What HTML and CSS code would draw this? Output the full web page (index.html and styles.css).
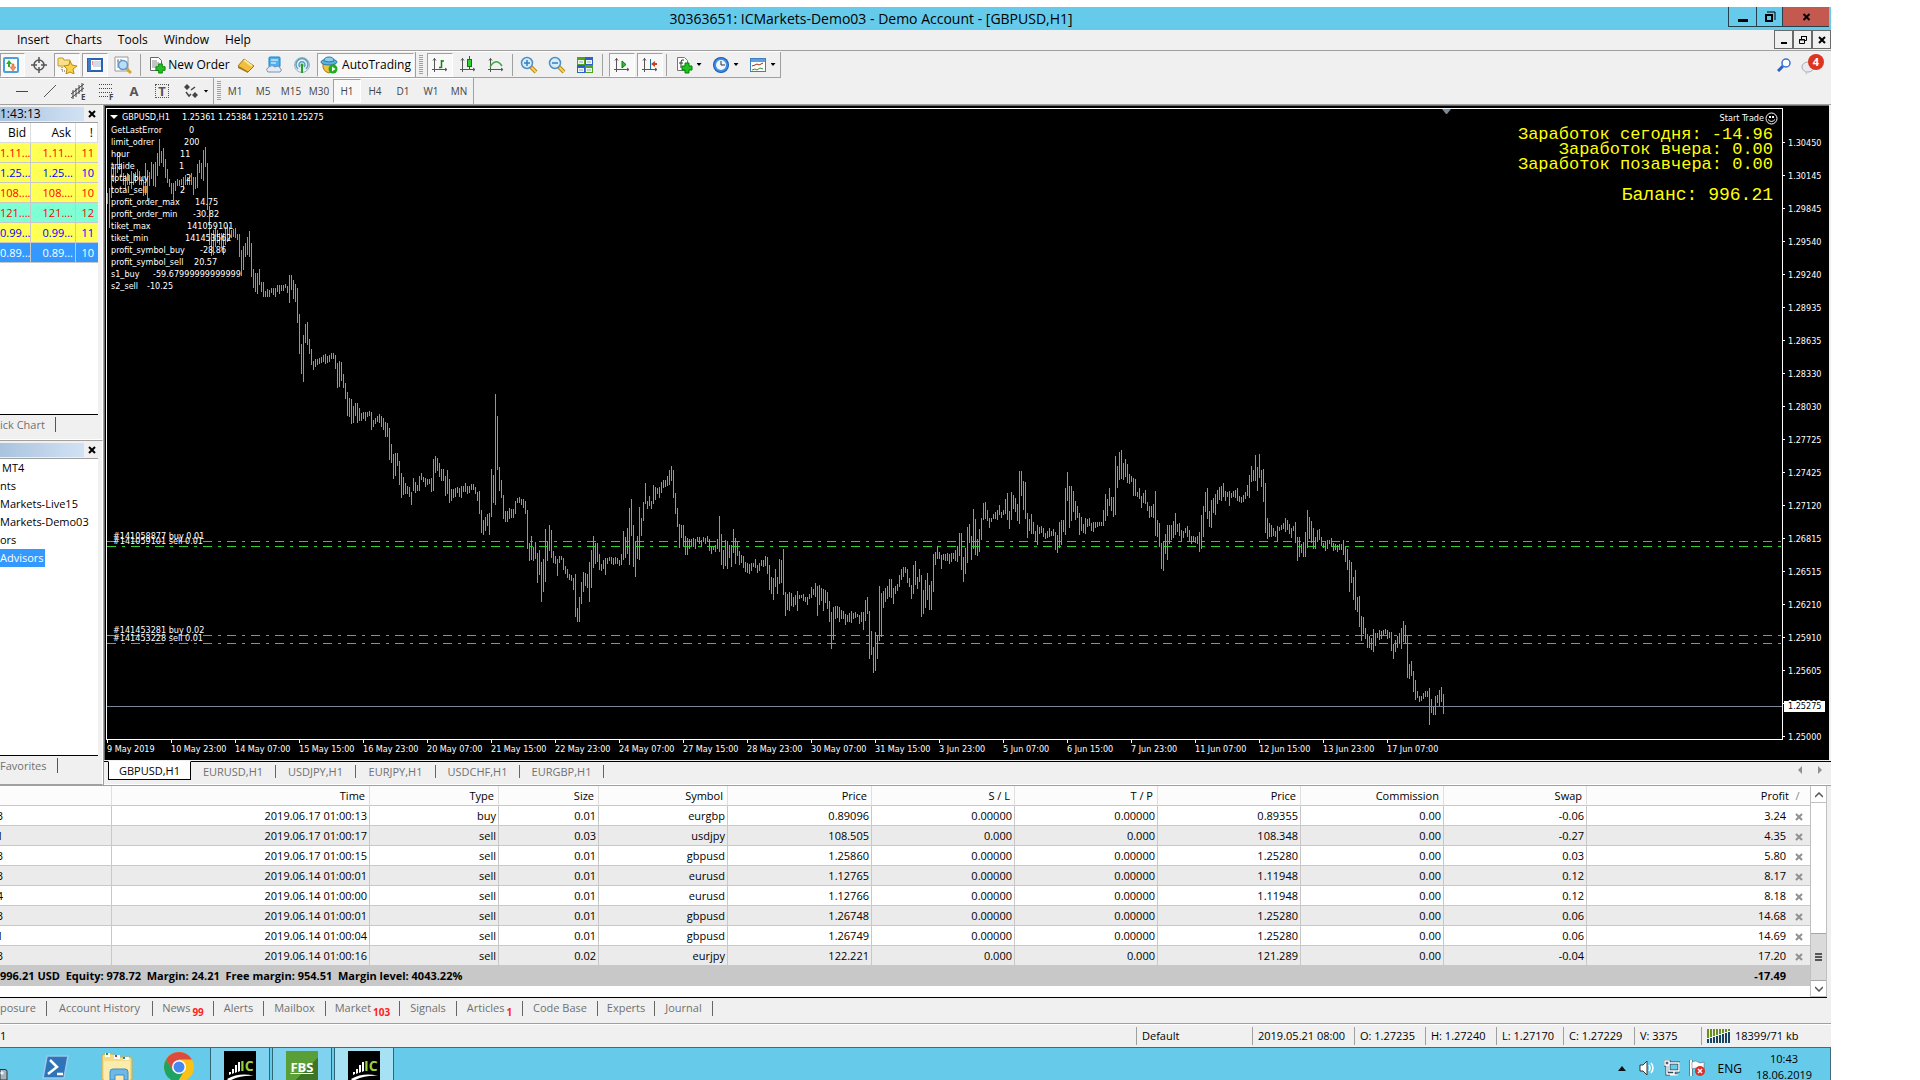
FILE: index.html
```html
<!DOCTYPE html>
<html lang="en">
<head>
<meta charset="utf-8">
<title>30363651: ICMarkets-Demo03 - Demo Account - [GBPUSD,H1]</title>
<link rel="stylesheet" href="styles.css">
</head>
<body>
<svg class="defs" aria-hidden="true">
  <defs>
    <symbol id="i-axes" viewBox="0 0 18 18"><path d="M3.5 2v14M1 13.500h15M2 4.500l1.500-2 1.500 2M14 12l2 1.500-2 1.500" fill="none" stroke="#555"/></symbol>
    <symbol id="i-lens" viewBox="0 0 18 18"><path d="M11 11l5 5" stroke="#b98a1c" stroke-width="4"/><path d="M11 11l5 5" stroke="#f6d55c" stroke-width="2"/><circle cx="7" cy="7" r="5.500" fill="#d6ecfb" stroke="#4a90c8" stroke-width="1.500"/></symbol>
    <symbol id="i-plus" viewBox="0 0 12 12"><path d="M4 1h4v3h3v4H8v3H4V8H1V4h3z" fill="#1fc41f" stroke="#0b7d0b"/></symbol>
    <symbol id="i-x" viewBox="0 0 8 8"><path d="M1 1l6 6M7 1L1 7" stroke="currentColor" stroke-width="2" fill="none"/></symbol>
    <symbol id="i-bars" viewBox="0 0 32 32"><path d="M0 0h32v32H0z" fill="#000"/><path d="M5 24v-3h2v2zM8 23v-5h2v4zM11 22v-8h2v7zM14 21V11h2v9z" fill="#fff"/><path d="M3 28q13-7 27-3-13-1-25 5z" fill="#fff"/></symbol>
  </defs>
</svg>

<div class="app">
  <header class="titlebar">
    <h1>30363651: ICMarkets-Demo03 - Demo Account - [GBPUSD,H1]</h1>
    <div class="win-buttons">
      <button type="button" class="w-min" aria-label="Minimize"><svg width="12" height="12"><path d="M1 8h10v3H1z"/></svg></button>
      <button type="button" class="w-max" aria-label="Restore"><svg width="12" height="12"><path d="M3 1h8v8" fill="none" stroke="#000"/><path d="M2 4h6v6H2z" fill="none" stroke="#000" stroke-width="2"/></svg></button>
      <button type="button" class="w-close" aria-label="Close"><svg width="9" height="8"><use href="#i-x"/></svg></button>
    </div>
  </header>

  <nav class="menubar">
    <button type="button">Insert</button><button type="button">Charts</button><button type="button">Tools</button><button type="button">Window</button><button type="button">Help</button>
    <div class="mdi">
      <button type="button" aria-label="Minimize chart"><svg width="10" height="10"><path d="M2 7h6v2H2z"/></svg></button>
      <button type="button" aria-label="Restore chart"><svg width="10" height="10"><path d="M3.500 4V1.500h5v4H7M3 1.500h6M1.500 4.500h5v4h-5zM1 5h6" fill="none" stroke="#000"/></svg></button>
      <button type="button" aria-label="Close chart"><svg width="8" height="8"><use href="#i-x"/></svg></button>
    </div>
  </nav>

  <div class="toolbars">
    <div class="bar">
      <button type="button" class="tb on first" aria-label="Market Watch"><svg width="18" height="18"><rect x="2" y="2" width="14" height="14" rx="1" fill="#fff" stroke="#4b9fdc" stroke-width="2"/><path d="M4 8l3-4 3 4H8v3H6V8z" fill="#26b226"/><path d="M8 11l3 4 3-4h-2V8h-2v3z" fill="#f4935c" stroke="#d4501c" stroke-width=".5"/></svg></button>
      <button type="button" class="tb" aria-label="Data Window"><svg width="18" height="18"><circle cx="9" cy="9" r="5" fill="none" stroke="#555" stroke-width="1.500"/><path d="M9 1v6M9 11v6M1 9h6M11 9h6" stroke="#555" stroke-width="1.500"/></svg></button>
      <button type="button" class="tb on" aria-label="Navigator"><svg width="20" height="18"><path d="M1 3q0-1 1-1h4l1 2h6v6H1z" fill="#f8e08c" stroke="#c79a20"/><path d="M5 11v4h3" fill="none" stroke="#555" stroke-dasharray="1 1"/><path d="M13 5l2 4 5 1-4 3 1 5-4-2-4 2 1-5-3-3 5-1z" fill="#fbd24a" stroke="#b98a14"/></svg></button>
      <button type="button" class="tb on" aria-label="Terminal"><svg width="18" height="18"><rect x="2" y="3" width="14" height="12" fill="#fff" stroke="#2b62ad" stroke-width="2"/><path d="M2 3h3v12H2z" fill="#3c7ac8"/><path d="M7 6h8M7 8h8M7 10h8" stroke="#9db9d8"/><path d="M6 6h1M6 8h1" stroke="#d22"/></svg></button>
      <button type="button" class="tb" aria-label="Strategy Tester"><svg width="18" height="18"><path d="M1 1h13v14H1z" fill="#fff" stroke="#999"/><path d="M4 3v9M7 3v9M3 5h2M6 8h2" stroke="#888"/><path d="M12 12l5 5" stroke="#d6a72a" stroke-width="3"/><circle cx="9" cy="9" r="4.500" fill="#bcdcf4" stroke="#5b9bd0" stroke-width="1.500"/></svg></button>
      <i class="sep"></i>
      <button type="button" class="tb new-order"><svg width="18" height="18"><path d="M2.500 1.500h8l3 3v10h-11z" fill="#fff" stroke="#666"/><path d="M4 5h5M4 7h7M4 9h7M4 11h4" stroke="#888"/><use href="#i-plus" x="7" y="7" width="11" height="11"/></svg>New Order</button>
      <button type="button" class="tb" aria-label="MetaEditor"><svg width="18" height="18"><path d="M1 10l6-7 10 7-6 6z" fill="#f0bf3d" stroke="#a6741a"/><path d="M1 10l10 6v1L1 12z" fill="#a6741a"/><path d="M7 4l8 6" stroke="#fdeaa0" stroke-width="2"/></svg></button>
      <button type="button" class="tb" aria-label="MQL5 Community"><svg width="18" height="18"><rect x="4" y="1" width="11" height="10" rx="1" fill="#4fb0ef" stroke="#1f80c8"/><path d="M6 4h7M6 7h5" stroke="#fff"/><path d="M3 16q-3-3 1-5 3-3 6 0 4-2 5 1 3 2 0 4z" fill="#e3ebf5" stroke="#7a93b5"/></svg></button>
      <button type="button" class="tb" aria-label="Signals"><svg width="18" height="18"><circle cx="9" cy="9" r="7.500" fill="#e5eef0" stroke="#9ab5bd"/><path d="M5 13a6 6 0 1 1 8 0M7 11a3 3 0 1 1 4 0" fill="none" stroke="#5a9fc0" stroke-width="1.500"/><circle cx="9" cy="9" r="1.500" fill="#2a9d2a"/><path d="M9 9v8" stroke="#2a9d2a" stroke-width="2"/></svg></button>
      <button type="button" class="tb on auto"><svg width="18" height="18"><path d="M3 8q-1 7 6 9l5-3 1-7z" fill="#f0c040" stroke="#a67c14"/><ellipse cx="9" cy="6" rx="8" ry="3" fill="#5cb2dc" stroke="#2a7aa8"/><path d="M4 5q0-4 5-4t5 4q-5 2-10 0z" fill="#8fd0ee" stroke="#2a7aa8"/><circle cx="13" cy="13" r="4.500" fill="#1fae1f"/><path d="M12 10.500l3.500 2.500-3.500 2.500z" fill="#fff"/></svg>AutoTrading</button>
      <i class="edge"></i><i class="grip"></i>
      <button type="button" class="tb on" aria-label="Bar Chart"><svg width="18" height="18"><use href="#i-axes"/><path d="M8 11.500h2.500M10.500 4v8M10.500 5h2.500" fill="none" stroke="#0a8a0a" stroke-width="1.500"/></svg></button>
      <button type="button" class="tb" aria-label="Candlesticks"><svg width="18" height="18"><use href="#i-axes"/><path d="M10.500 0v13" stroke="#0a7a0a"/><rect x="8.500" y="3.500" width="4" height="7" fill="#2fd02f" stroke="#0a7a0a"/></svg></button>
      <button type="button" class="tb" aria-label="Line Chart"><svg width="18" height="18"><use href="#i-axes"/><path d="M3 11Q9 1 15 10" fill="none" stroke="#3fa83f" stroke-width="1.500"/></svg></button>
      <i class="sep tight"></i>
      <button type="button" class="tb" aria-label="Zoom In"><svg width="18" height="18"><use href="#i-lens"/><path d="M4 7h6M7 4v6" stroke="#3a7fb8" stroke-width="1.500"/></svg></button>
      <button type="button" class="tb" aria-label="Zoom Out"><svg width="18" height="18"><use href="#i-lens"/><path d="M4 7h6" stroke="#3a7fb8" stroke-width="1.500"/></svg></button>
      <button type="button" class="tb" aria-label="Tile Windows"><svg width="18" height="18"><path d="M1 1h8v8H1zM9 9h8v8H9z" fill="#4ba41e"/><path d="M9 1h8v8H9zM1 9h8v8H1z" fill="#2b5fd0"/><path d="M2 4h6v4H2zM10 4h6v4h-6zM2 12h6v4H2zM10 12h6v4h-6z" fill="#eef4ee"/><path d="M3 6h4M11 6h4M3 14h4M11 14h4" stroke="#9ab"/></svg></button>
      <i class="sep"></i>
      <button type="button" class="tb on" aria-label="Auto Scroll"><svg width="18" height="18"><use href="#i-axes"/><path d="M9 5l4 3.500-4 3.500z" fill="#2fc02f" stroke="#0a7a0a"/></svg></button>
      <button type="button" class="tb on" aria-label="Chart Shift"><svg width="18" height="18"><use href="#i-axes"/><path d="M9.500 3v10" stroke="#1f6f9c"/><path d="M10 8l4-3v2h2v2h-2v2z" fill="#c8401c"/></svg></button>
      <i class="sep tight"></i>
      <button type="button" class="tb drop" aria-label="Indicators"><svg width="18" height="18"><path d="M2.500 1.500h7l3 3v10h-10z" fill="#fff" stroke="#777"/><path d="M9 4q-3-1-3 2v6M4 7h4" fill="none" stroke="#333"/><use href="#i-plus" x="6" y="6" width="12" height="12"/></svg><i class="caret"></i></button>
      <button type="button" class="tb drop" aria-label="Periods"><svg width="18" height="18"><circle cx="9" cy="9" r="8" fill="#1558b0"/><circle cx="9" cy="9" r="7" fill="#3b90e4"/><circle cx="9" cy="9" r="5" fill="#f0f6fc"/><path d="M9 5v4h4" fill="none" stroke="#333"/></svg><i class="caret"></i></button>
      <button type="button" class="tb drop" aria-label="Templates"><svg width="18" height="18"><rect x="1.500" y="2.500" width="15" height="13" fill="#fff" stroke="#3f7fc0"/><path d="M2 3h14v3H2z" fill="#5ba0e0"/><path d="M3 10l3-1 2-1 2 1 4-2" fill="none" stroke="#a03010"/><path d="M3 14l3-1 2 1 3-2 3 1" fill="none" stroke="#2a9a2a"/></svg><i class="caret"></i></button>
      <i class="edge"></i>
    </div>
    <div class="bar second">
      <button type="button" class="tb line" aria-label="Horizontal Line"><svg width="18" height="18"><path d="M3 9.500h12" stroke="#444"/></svg></button>
      <button type="button" class="tb" aria-label="Trendline"><svg width="18" height="18"><path d="M3 15L15 3" stroke="#555"/></svg></button>
      <button type="button" class="tb" aria-label="Equidistant Channel"><svg width="18" height="18"><path d="M2 12L15 2M2 16L15 6M4 8v9M7 6v9M10 3v9M13 1v9" stroke="#444"/><text x="12" y="18" font-size="8" font-weight="700" fill="#444">E</text></svg></button>
      <button type="button" class="tb" aria-label="Fibonacci"><svg width="18" height="18"><path d="M2 2.500h14M2 6.500h14M2 10.500h14M2 14.500h9" stroke="#444" stroke-dasharray="1 1"/><text x="12" y="18" font-size="8" font-weight="700" fill="#444">F</text></svg></button>
      <button type="button" class="tb letter">A</button>
      <button type="button" class="tb letter boxed"><span>T</span></button>
      <button type="button" class="tb drop" aria-label="Arrows"><svg width="18" height="18"><path d="M5 2l3 3-3 3-3-3z M13 10l3 3-3 3-3-3z" fill="#444"/><path d="M4 10l3 4 2-2M9 8l4-3" fill="none" stroke="#444" stroke-width="1.500"/></svg><i class="caret"></i></button>
      <i class="edge"></i><i class="grip"></i>
      <div class="frames">
        <button type="button">M1</button><button type="button">M5</button><button type="button">M15</button><button type="button">M30</button><button type="button" class="on">H1</button><button type="button">H4</button><button type="button">D1</button><button type="button">W1</button><button type="button">MN</button>
      </div>
      <i class="edge"></i>
    </div>
    <div class="tools-right">
      <button type="button" class="find" aria-label="Search"><svg width="14" height="14"><path d="M1 13l5-5" stroke="#2a5fc4" stroke-width="3"/><circle cx="9" cy="5" r="4" fill="#fff" stroke="#3a72d4" stroke-width="1.500"/></svg></button>
      <button type="button" class="chat" aria-label="Messages"><svg width="24" height="22"><ellipse cx="7" cy="13" rx="6" ry="5" fill="#e8eaef" stroke="#a8abb5"/><path d="M4 17l1 4 3-4z" fill="#c8cad2"/><circle cx="15" cy="8" r="8" fill="#dd3420"/><text x="15" y="12" text-anchor="middle" font-size="11" font-weight="700" fill="#fff">4</text></svg></button>
    </div>
  </div>

  <main class="workspace">
    <aside class="side">
      <section class="panel watch">
        <div class="cap"><h2>1:43:13</h2><button type="button" aria-label="Close Market Watch"><svg width="8" height="8"><use href="#i-x"/></svg></button></div>
        <div class="body">
          <table class="quotes">
            <colgroup><col class="c-bid"><col class="c-ask"><col class="c-spr"></colgroup>
            <thead><tr><th>Bid</th><th>Ask</th><th>!</th></tr></thead>
            <tbody>
              <tr class="down"><td>1.11...</td><td>1.11...</td><td>11</td></tr>
              <tr class="up"><td>1.25...</td><td>1.25...</td><td>10</td></tr>
              <tr class="down"><td>108....</td><td>108....</td><td>10</td></tr>
              <tr class="down aqua"><td>121....</td><td>121....</td><td>12</td></tr>
              <tr class="up"><td>0.99...</td><td>0.99...</td><td>11</td></tr>
              <tr class="sel"><td>0.89...</td><td>0.89...</td><td>10</td></tr>
            </tbody>
          </table>
        </div>
        <div class="ptabs"><a href="#tick">ick Chart</a></div>
      </section>
      <section class="panel navi">
        <div class="cap"><h2></h2><button type="button" aria-label="Close Navigator"><svg width="8" height="8"><use href="#i-x"/></svg></button></div>
        <ul class="body">
          <li>MT4</li><li>nts</li><li>Markets-Live15</li><li>Markets-Demo03</li><li>ors</li><li><span class="picked">Advisors</span></li>
        </ul>
        <div class="ptabs"><a href="#favorites">Favorites</a></div>
      </section>
    </aside>

    <section class="charts">
      <div class="chart">
        <div class="plot">
          <svg class="canvas" width="100%" height="100%">
            <g class="orders"><path d="M0 432.500H4000M0 437.500H4000M0 526.500H4000M0 534.500H4000"/></g>
            <path class="last" d="M0 597.500H4000"/>
            <path id="bars" class="bars" d=""/>
            <path d="M1335 0h9l-4 5h-1z" fill="#778899"/>
            <path d="M3 6h8l-4 4z" fill="#fff"/>
            <g class="note" id="note">
              <text x="15" y="11">GBPUSD,H1</text><text x="75" y="11">1.25361 1.25384 1.25210 1.25275</text>
              <text x="4" y="24">GetLastError</text><text x="82" y="24">0</text>
              <text x="4" y="36">limit_odrer</text><text x="77" y="36">200</text>
              <text x="4" y="48">hour</text><text x="73" y="48">11</text>
              <text x="4" y="60">traide</text><text x="72" y="60">1</text>
              <text x="4" y="72">total_buy</text><text x="79" y="72">2</text>
              <text x="4" y="84">total_sell</text><text x="73" y="84">2</text>
              <text x="4" y="96">profit_order_max</text><text x="88" y="96">14.75</text>
              <text x="4" y="108">profit_order_min</text><text x="86" y="108">-30.82</text>
              <text x="4" y="120">tiket_max</text><text x="80" y="120">141059101</text>
              <text x="4" y="132">tiket_min</text><text x="78" y="132">141453562</text>
              <text x="4" y="144">profit_symbol_buy</text><text x="93" y="144">-28.86</text>
              <text x="4" y="156">profit_symbol_sell</text><text x="87" y="156">20.57</text>
              <text x="4" y="168">s1_buy</text><text x="46" y="168">-59.67999999999999</text>
              <text x="4" y="180">s2_sell</text><text x="40" y="180">-10.25</text>
              <text x="6" y="430">#141058877 buy 0.01</text>
              <text x="6" y="435">#141059101 sell 0.01</text>
              <text x="6" y="524">#141453281 buy 0.02</text>
              <text x="6" y="532">#141453228 sell 0.01</text>
            </g>
          </svg>
          <div class="stats">
            <p class="start">Start Trade<svg width="13" height="13"><circle cx="6.500" cy="6.500" r="5.500" fill="none" stroke="#fff"/><path d="M4 4h2v2H4zM7 4h2v2H7z" fill="#fff"/><path d="M3 7.500q3.500 4 7 0" fill="none" stroke="#fff"/></svg></p>
            <p>Заработок сегодня: -14.96</p>
            <p>Заработок вчера: 0.00</p>
            <p>Заработок позавчера: 0.00</p>
            <p class="balance">Баланс: 996.21</p>
          </div>
        </div>
        <div class="prices">
          <ol>
            <li>1.30450</li><li>1.30145</li><li>1.29845</li><li>1.29540</li><li>1.29240</li><li>1.28935</li><li>1.28635</li><li>1.28330</li><li>1.28030</li><li>1.27725</li><li>1.27425</li><li>1.27120</li><li>1.26815</li><li>1.26515</li><li>1.26210</li><li>1.25910</li><li>1.25605</li><li>1.25305</li><li>1.25000</li>
          </ol>
          <span class="tag">1.25275</span>
        </div>
        <ol class="times">
          <li>9 May 2019</li><li>10 May 23:00</li><li>14 May 07:00</li><li>15 May 15:00</li><li>16 May 23:00</li><li>20 May 07:00</li><li>21 May 15:00</li><li>22 May 23:00</li><li>24 May 07:00</li><li>27 May 15:00</li><li>28 May 23:00</li><li>30 May 07:00</li><li>31 May 15:00</li><li>3 Jun 23:00</li><li>5 Jun 07:00</li><li>6 Jun 15:00</li><li>7 Jun 23:00</li><li>11 Jun 07:00</li><li>12 Jun 15:00</li><li>13 Jun 23:00</li><li>17 Jun 07:00</li>
        </ol>
      </div>
      <nav class="ctabs">
        <a href="#gbpusd" class="active">GBPUSD,H1</a><a href="#eurusd">EURUSD,H1</a><a href="#usdjpy">USDJPY,H1</a><a href="#eurjpy">EURJPY,H1</a><a href="#usdchf">USDCHF,H1</a><a href="#eurgbp">EURGBP,H1</a>
        <span class="arrows"><svg width="24" height="8"><path d="M4 0v8L0 4zM20 0v8l4-4z" fill="#909090"/></svg></span>
      </nav>
    </section>
  </main>

  <section class="terminal">
    <div class="trade">
      <div class="scroller">
        <table class="deals">
          <colgroup><col class="d0"><col class="d1"><col class="d2"><col class="d3"><col class="d2"><col class="d4"><col class="d5"><col class="d5"><col class="d5"><col class="d5"><col class="d5"><col></colgroup>
          <thead><tr><th></th><th>Time</th><th>Type</th><th>Size</th><th>Symbol</th><th>Price</th><th>S / L</th><th>T / P</th><th>Price</th><th>Commission</th><th>Swap</th><th>Profit<i class="mark">/</i></th></tr></thead>
          <tbody id="deals"></tbody>
          <tfoot><tr><td colspan="11">996.21 USD&nbsp; Equity: 978.72&nbsp; Margin: 24.21&nbsp; Free margin: 954.51&nbsp; Margin level: 4043.22%</td><td>-17.49</td></tr></tfoot>
        </table>
      </div>
      <div class="vbar">
        <button type="button" aria-label="Scroll up"><svg width="8" height="6"><path d="M0 5l4-4 4 4" fill="none" stroke="#555" stroke-width="1.500"/></svg></button>
        <div class="thumb"><svg width="7" height="8"><path d="M0 1h7M0 4h7M0 7h7" stroke="#555" stroke-width="2"/></svg></div>
        <button type="button" aria-label="Scroll down"><svg width="8" height="6"><path d="M0 1l4 4 4-4" fill="none" stroke="#555" stroke-width="1.500"/></svg></button>
      </div>
    </div>
    <nav class="ttabs">
      <a href="#exposure" class="cut">posure</a><a href="#history">Account History</a><a href="#news">News<sub>99</sub></a><a href="#alerts">Alerts</a><a href="#mailbox">Mailbox</a><a href="#market">Market<sub>103</sub></a><a href="#signals">Signals</a><a href="#articles">Articles<sub>1</sub></a><a href="#codebase">Code Base</a><a href="#experts">Experts</a><a href="#journal">Journal</a>
    </nav>
  </section>

  <footer class="status">
    <span class="help">1</span><span class="s-prof">Default</span><span class="s-time">2019.05.21 08:00</span><span class="s-o">O: 1.27235</span><span class="s-o">H: 1.27240</span><span class="s-l">L: 1.27170</span><span class="s-o">C: 1.27229</span><span class="s-l">V: 3375</span>
    <span class="s-net"><svg width="24" height="14"><path d="M1 0v9M4 0v8M7 0v7M10 0v6M13 0v5M16 0v4M19 0v3M22 0v2" stroke="#6b8e23" stroke-width="2"/><path d="M1 10v4M4 9v5M7 8v6M10 7v7M13 6v8M16 5v9M19 4v10M22 3v11" stroke="#154360" stroke-width="2"/></svg>18399/71 kb</span>
  </footer>

  <div class="taskbar">
    <button type="button" class="task sliver" aria-label="Server Manager"><svg width="8" height="32"><path d="M0 21.500h5q2 0 2 2V32H0z" fill="#9fb4c0" stroke="#333"/><path d="M0 25h4M2 23v4" stroke="#fff"/></svg></button>
    <button type="button" class="task" aria-label="PowerShell"><svg width="32" height="32"><path d="M8 8h21l-4 22H4z" fill="#2f74b8" stroke="#9cc8ea" stroke-width="1.500"/><path d="M11 12l7 7-9 7M18 26h6" fill="none" stroke="#fff" stroke-width="2.500"/></svg></button>
    <button type="button" class="task" aria-label="Explorer"><svg width="32" height="32"><path d="M1 9q0-3 3-3h8l3 3h14q2 0 2 2v21H1z" fill="#f4dc86" stroke="#d0ac4a"/><path d="M4 5h5v4H4zM13 7h6v4h-6zM22 9h6v3h-6z" fill="#fff"/><path d="M5 5h2v2H5z" fill="#2a9a2a"/><path d="M14 7h2v2h-2z" fill="#c0392b"/><path d="M22 9h2v2h-2z" fill="#2980b9"/><path d="M3 13h26v19H3z" fill="#fbecae"/><path d="M9 32v-8q0-3 3-3h12q3 0 3 3v8h-4v-5h-9v5z" fill="#6fb8e6" stroke="#3d8ec4"/></svg></button>
    <button type="button" class="task" aria-label="Chrome"><svg width="32" height="32"><circle cx="16" cy="19" r="15" fill="#fbc116"/><path d="M3 11.500a15 15 0 0 1 26 0H16l-6.500 11z" fill="#dd4b3e"/><path d="M3 11.500a15 15 0 0 0 11.500 22.500l7-11.500q-5 6-12-.500z" fill="#1da362"/><circle cx="16" cy="19" r="7" fill="#fff"/><circle cx="16" cy="19" r="5.500" fill="#4688f1"/></svg></button>
    <button type="button" class="task open" aria-label="IC Markets MT4"><svg width="32" height="32"><use href="#i-bars"/><text x="16" y="20" class="brand">IC</text></svg></button>
    <button type="button" class="task open fbs"><span>FBS</span></button>
    <button type="button" class="task open current" aria-label="IC Markets MT4 Demo"><svg width="32" height="32"><use href="#i-bars"/><text x="16" y="20" class="brand">IC</text></svg></button>
    <div class="tray">
      <svg width="8" height="5"><path d="M0 5l4-5 4 5z" fill="#111"/></svg>
      <svg width="16" height="16"><path d="M1 5h3l4-4v14l-4-4H1z" fill="#fff" stroke="#333"/><path d="M10 5q2 3 0 6M12 3q4 5 0 10" fill="none" stroke="#fff" stroke-width="1.500"/></svg>
      <svg width="16" height="16"><path d="M5 3h10v8H5zM1 1h4v4H1zM3 5v9h7M10 11v4M6 15h8" fill="none" stroke="#345" stroke-width="3"/><path d="M5 3h10v8H5zM1 1h4v4H1zM3 5v9h7M10 11v4M6 15h8" fill="none" stroke="#fff" stroke-width="1.500"/></svg>
      <svg width="17" height="16"><path d="M2 0v16" stroke="#345" stroke-width="3"/><path d="M2 0v16" stroke="#fff" stroke-width="2"/><path d="M3 2q4-2 6 0t6 0v7q-4 2-6 0t-6 0z" fill="#fff" stroke="#555" stroke-width=".5"/><circle cx="11" cy="11" r="5" fill="#d9302c"/><path d="M9 9l4 4M13 9l-4 4" stroke="#fff" stroke-width="1.500"/></svg>
      <span class="lang">ENG</span>
      <time><span>10:43</span><span>18.06.2019</span></time>
    </div>
  </div>
</div>
<script src="chart.js"></script>
</body>
</html>
```
FILE: styles.css
```css
* { box-sizing: border-box; }
html, body { height: 100%; }
body {
  margin: 0;
  padding: 7px 89px 0 0;
  overflow: hidden;
  background: #fff;
  color: #000;
  font: 12px/16px "Open Sans", "Noto Sans", sans-serif;
}
h1, h2, p, ol, ul { margin: 0; padding: 0; font-weight: 400; list-style: none; }
button { margin: 0; padding: 0; border: 0; background: none; color: inherit; font: inherit; }
a { color: inherit; text-decoration: none; }
svg { display: block; flex: none; }
i { font-style: normal; }
.defs { position: absolute; width: 0; height: 0; }

.app { display: flex; flex-direction: column; height: 100%; background: #f0f0f0; }

/* title and menu */
.titlebar { display: flex; flex: none; height: 23px; padding-right: 2px; background: #66caea; }
.titlebar h1 { flex: 1; padding: 0 0 0 14px; font-size: 14px; line-height: 23px; text-align: center; }
.win-buttons { display: flex; height: 20px; }
.win-buttons button { display: flex; align-items: center; justify-content: center; border: 1px solid #24404a; border-width: 0 0 1px 1px; }
.w-min { width: 28px; }
.w-max { width: 26px; }
.win-buttons .w-close { width: 47px; background: #c4594f; }
.menubar { display: flex; flex: none; height: 21px; padding-left: 9px; border-bottom: 1px solid #a0a0a0; }
.menubar > button { padding: 0 8px; line-height: 20px; }
.mdi { display: flex; height: 19px; margin-left: auto; }
.mdi button { display: flex; align-items: center; justify-content: center; width: 19px; border: 1px solid #6a6a6a; }

/* toolbars */
.toolbars { display: grid; grid-template-columns: 1fr auto; flex: none; height: 54px; border-bottom: 1px solid #a0a0a0; }
.bar { display: flex; align-items: center; justify-self: start; height: 27px; padding-top: 1px; border-bottom: 1px solid #a0a0a0; box-shadow: inset 0 1px #fff; }
.bar.second { grid-column: 1; height: 26px; padding-top: 0; border-bottom: 0; }
.tb { display: flex; flex: none; align-items: center; justify-content: center; width: 28px; height: 24px; }
.tb.on { width: 26px; margin: 0 1px; background: #f8f8f8; border: 1px solid; border-color: #a0a0a0 #fff #fff #a0a0a0; }
.tb.first { width: 25px; margin: 0; padding-right: 3px; }
.tb.new-order { gap: 2px; width: 86px; }
.tb.auto { gap: 4px; width: 97px; }
.tb.drop { gap: 4px; width: 37px; padding-left: 1px; }
.tb.line { width: 36px; padding-left: 8px; }
.letter { color: #555; font-weight: 700; font-size: 13px; }
.boxed span { padding: 0 2px; border: 1px dotted #555; line-height: 12px; }
.sep { flex: none; width: 1px; height: 22px; margin: 0 5px 0 3px; background: #a0a0a0; }
.sep.tight { margin: 0 2px; }
.edge { flex: none; align-self: stretch; width: 1px; background: #a0a0a0; }
.grip { flex: none; width: 4px; height: 20px; margin: 0 3px; background: repeating-linear-gradient(#a0a0a0 0 1px, #f0f0f0 1px 2px); }
.second .grip { margin-right: 0; }
.caret { flex: none; width: 5px; height: 3px; background: #000; clip-path: polygon(0 0, 100% 0, 50% 100%); }
.frames { display: flex; align-items: center; color: #444; font-size: 10px; }
.frames button { width: 28px; height: 24px; }
.frames .on { background: #f8f8f8; border: 1px solid; border-color: #a0a0a0 #fff #fff #a0a0a0; }
.tools-right { display: flex; grid-row: 1; grid-column: 2; align-items: center; gap: 10px; padding-right: 6px; }

/* workspace */
.workspace { display: flex; flex: 1; min-height: 0; }
.side { display: flex; flex: none; flex-direction: column; width: 103px; }
.panel { display: flex; flex-direction: column; padding: 2px 4px 0 0; border-right: 1px solid #fff; }
.watch { height: 335px; border-bottom: 1px solid #fff; }
.navi { flex: 1; min-height: 0; padding-bottom: 4px; border-top: 1px solid #a0a0a0; border-bottom: 1px solid #a0a0a0; }
.cap { display: flex; flex: none; align-items: center; height: 14px; margin-bottom: 1px; }
.cap h2 { flex: 1; height: 14px; background: linear-gradient(90deg, #a9c3de, #d2e2f4); font-size: 12px; line-height: 14px; }
.cap button { display: flex; flex: none; justify-content: center; width: 12px; margin-left: 2px; }
.panel .body { flex: 1; overflow: hidden; background: #fff; border-top: 1px solid #a0a0a0; border-bottom: 1px solid #000; }
.ptabs { display: flex; flex: none; height: 24px; padding-top: 2px; color: #707070; }
.ptabs a { height: 15px; padding-right: 10px; border-right: 1px solid #555; font-size: 11px; line-height: 15px; }
.navi .body { font-size: 11px; line-height: 18px; white-space: nowrap; }
.navi li:first-child { padding-left: 2px; }
.picked { display: inline-block; height: 18px; padding-right: 1px; background: #3399ff; color: #fff; }
.quotes { width: 98px; border-collapse: separate; border-spacing: 0; table-layout: fixed; }
.c-bid { width: 31px; }
.c-ask { width: 45px; }
.quotes th { height: 20px; padding: 0 4px 0 0; border-right: 1px solid #ddd; border-bottom: 1px solid #ddd; font-weight: 400; text-align: right; }
.quotes td { height: 20px; padding: 0 2px 0 0; border-right: 1px solid #c8c8c8; border-bottom: 1px solid #c8c8c8; background: #ffff54; font-size: 11px; text-align: right; white-space: nowrap; }
.quotes td:last-child { padding-right: 4px; border-right: 0; }
.quotes .down td { color: #f00; }
.quotes .up td { color: #00f; }
.quotes .aqua td { background: #7fffd4; }
.quotes .sel td { background: #3399ff; color: #fff; }

/* chart */
.charts { display: flex; flex: 1; flex-direction: column; min-width: 0; border-left: 1px solid #a0a0a0; }
.chart {
  display: grid;
  grid-template: 1fr 20px / 1fr 46px;
  flex: 1;
  min-height: 0;
  margin-right: 2px;
  padding: 2px 0 0 1px;
  background: #000;
  border: 1px solid #696969;
  border-width: 1px 0 0 1px;
  color: #fff;
  font: 9px/12px "DejaVu Sans Condensed", "Open Sans", sans-serif;
}
.plot { position: relative; overflow: hidden; border: 1px solid #fff; }
.canvas { position: absolute; inset: 0; }
.orders { fill: none; stroke: #32cd32; stroke-dasharray: 9 6 3 6; }
.last { stroke: #778899; }
.bars { fill: #00ff00; }
.note { fill: #fff; }
.stats { position: absolute; top: 2px; right: 9px; color: #ff0; font: 17px/15px "Liberation Mono", monospace; text-align: right; }
.start { display: flex; align-items: center; justify-content: flex-end; gap: 1px; margin: 0 -5px 2px 0; color: #fff; font: 9px/14px "DejaVu Sans Condensed", "Open Sans", sans-serif; }
.stats .balance { margin-top: 13px; font-size: 18px; line-height: 20px; }
.prices { position: relative; overflow: hidden; padding-top: 18px; }
.prices li { display: flex; align-items: center; gap: 3px; height: 33px; }
.prices li::before { content: ""; width: 2px; height: 1px; background: #fff; }
.tag { position: absolute; top: 593px; left: 1px; width: 41px; height: 11px; padding-left: 4px; background: #fff; color: #000; line-height: 11px; }
.times { display: flex; grid-column: 1 / -1; overflow: hidden; padding-left: 1px; white-space: nowrap; }
.times li { flex: none; width: 64px; }
.times li::before { content: ""; display: block; width: 1px; height: 3px; background: #fff; }
.ctabs { display: grid; grid-template-columns: 83px 85px 80px 80px 84px 84px 1fr; flex: none; height: 24px; padding: 0 6px 0 4px; margin-top: 1px; border-top: 1px solid #000; border-bottom: 1px solid #fff; color: #707070; font-size: 11px; }
.ctabs a { display: flex; align-items: center; justify-content: center; height: 13px; margin-top: 3px; border-right: 1px solid #666; }
.ctabs .active { height: 19px; margin-top: -1px; border: 1px solid #000; border-top-color: #fff; background: #fff; color: #000; }
.arrows { justify-self: end; padding: 4px 3px 0 0; }

/* terminal */
.terminal { flex: none; border-top: 1px solid #a0a0a0; border-bottom: 1px solid #a0a0a0; }
.trade { display: flex; height: 212px; margin-right: 4px; background: #fff; border-bottom: 1px solid #000; }
.scroller { flex: 1; min-width: 0; overflow: hidden; }
.deals { width: 100%; border-collapse: separate; border-spacing: 0; table-layout: fixed; font-size: 11px; line-height: 16px; text-align: right; white-space: nowrap; }
.d0 { width: 112px; } .d1 { width: 258px; } .d2 { width: 129px; } .d3 { width: 100px; } .d4 { width: 144px; } .d5 { width: 143px; }
.deals th { height: 20px; padding: 0 4px 0 0; border-right: 1px solid #e0e0e0; border-bottom: 1px solid #c8c8c8; background: #fcfcfc; font-weight: 400; }
.deals td { height: 20px; padding: 0 2px 0 0; border-right: 1px solid #c8c8c8; border-bottom: 1px solid #c8c8c8; }
.deals tr > :last-child { border-right: 0; }
.deals td:first-child { padding-right: 109px; direction: rtl; }
.deals tbody tr:nth-child(even) td { background: #ebebeb; }
.deals tbody td:last-child { padding-right: 7px; }
.deals td svg { display: inline-block; margin-left: 9px; color: #909090; vertical-align: middle; }
.mark { display: inline-block; width: 17px; color: #888; text-align: center; }
.deals tfoot td { height: 20px; border: 0; background: #c8c8c8; font-weight: 700; }
.deals tfoot td:first-child { padding: 0; direction: ltr; text-align: left; }
.deals tfoot td:last-child { padding-right: 24px; }
.vbar { display: flex; flex: none; flex-direction: column; width: 17px; padding-top: 1px; border: 1px solid #c0c0c0; border-width: 0 1px; }
.vbar button { display: flex; align-items: center; justify-content: center; height: 16px; border-bottom: 1px solid #c0c0c0; }
.thumb { display: flex; align-items: center; justify-content: center; height: 48px; margin-top: auto; background: #dadada; border: 1px solid #a6a6a6; border-width: 1px 0; }
.ttabs { display: grid; grid-template-columns: 47px 106px 61px 50px 62px 74px 57px 66px 75px 57px 58px; height: 25px; padding-top: 3px; color: #707070; font-size: 11px; }
.ttabs a { display: flex; justify-content: center; height: 15px; border-right: 1px solid #666; line-height: 14px; white-space: nowrap; }
.ttabs .cut { justify-content: flex-start; }
.ttabs sub { padding: 4px 0 0 2px; color: #f22; font-size: 10px; font-weight: 700; line-height: 14px; vertical-align: baseline; }

.status { display: flex; flex: none; align-items: center; height: 23px; border-top: 1px solid #fff; font-size: 11px; }
.status span { flex: none; height: 18px; padding-left: 5px; border-left: 1px solid #a0a0a0; line-height: 18px; }
.status .help { flex: 1; padding: 0; border: 0; }
.s-prof { width: 116px; } .s-time { width: 102px; } .s-o { width: 71px; } .s-l { width: 67px; }
.status .s-net { display: flex; align-items: center; gap: 4px; width: 130px; }

/* taskbar */
.taskbar { display: flex; flex: none; height: 33px; overflow: hidden; background: #66caea; border-top: 1px solid #3f6b7a; border-right: 1px solid #3f6b7a; }
.task { display: flex; flex: none; align-items: flex-start; justify-content: center; width: 62px; height: 34px; }
.task.sliver { justify-content: flex-start; width: 24px; }
.task.open { width: 60px; margin-right: 2px; padding-top: 3px; background: #7fd3ee; border: 1px solid #2f6577; border-width: 0 1px; }
.task.current { background: #a6e2f4; }
.brand { fill: #9bd03c; font-size: 14px; font-weight: 700; }
.fbs span { width: 32px; height: 32px; background: linear-gradient(135deg, #5a9e38 60%, #3d7426 60%); color: #fff; font-weight: 700; font-size: 13px; line-height: 32px; text-decoration: underline; }
.tray { display: flex; align-items: flex-start; gap: 9px; margin-left: auto; padding: 12px 18px 0 0; }
.tray > svg:first-child { margin: 6px 4px 0 0; }
.tray .lang { margin: 1px 0 0 3px; font-size: 12px; }
.tray time { display: flex; flex-direction: column; width: 56px; margin: -9px 0 0 5px; font-size: 11px; line-height: 16px; text-align: center; }
```
FILE: chart.js
```js
// Hourly bars: high/low pairs in thirds of a pixel, each run measured from its own base line.
var runs = [
  { base: 21, data: [
    188,222,174,294,110,204,105,156,110,160,66,130,70,120,100,140,130,165,135,180,130,165,135,165,123,177,130,165,125,160,117,150,123,165,140,165,150,198,98,195,
    120,213,126,168,96,147,102,168,96,171,69,138,27,108,63,99,54,111,87,144,117,159,147,171,159,192,159,210,153,183,147,168,150,168,147,165,141,180,135,165,
    140,165,141,165,129,165,141,195,141,177,102,174,90,129,99,147,60,153,51,111,99,240,228,345,310,378,300,375,290,350,300,340,310,345,310,355,310,375,290,345,
    285,335,290,330,300,325,297,321,294,324,312,330,312,381,360,438,348,420,339,381,321,375,303,381,339,441,417,474,429,486,429,492,417,465,456,486,456,501,483,501,
    477,501,480,501,474,489,474,495,474,501,465,486,465,492,465,483,465,483,462,474,468,489,435,519,435,480,450,507,462,516,474,579,552,672,642,732,615,756,582,639,
    576,645,627,672,657,705,693,720,687,711,687,705,684,702,681,699,675,696,672,702,678,699,675,696,669,687,669,687,675,717,699,774,693,771,696,753,732,774,759,807,
    786,858,804,861,807,882,828,879,819,858,819,879,834,873,849,873,846,867,846,873,846,861,843,858,846,900,870,891,864,882,858,876,852,879,858,891,864,900,876,921,
    879,921,894,990,942,999,972,1047,969,1038,969,1008,993,1065,1029,1104,1041,1095,1059,1092,1068,1092,1071,1101,1086,1125,1044,1083,1056,1089,1065,1083,1038,1083,1029,1050,1041,1056,1044,1071,
    1047,1065,1047,1062,1044,1086,987,1083,978,1029,984,1023,999,1041,1017,1053,1017,1053,1038,1098,1020,1092,1047,1119,1077,1113,1077,1104,1074,1101,1071,1089,1074,1101,1068,1104,1068,1086,1059,1086,
    1068,1092,1068,1089,1062,1080,1062,1080,1071,1092,1086,1113,1083,1152
  ] },
  { base: 271, data: [
    390,459,420,465,411,453,402,438,399,465,267,411,285,369,42,375,108,270,261,333,300,354,345,417,393,426,393,426,384,417,387,414,387,414,363,402,354,369,351,369,
    357,375,357,384,363,402,390,507,489,543,468,540,501,543,486,537,519,609,510,585,546,666,537,636,447,606,485,543,435,513,450,534,513,549,528,552,537,588,528,549,
    528,540,534,570,558,582,567,594,582,600,585,603,594,630,582,711,684,726,651,726,606,672,576,636,579,618,582,624,546,666,510,624,468,564,489,552,489,546,522,570,
    552,573,540,567,534,585,534,552,531,543,531,552,534,555,531,552,534,552,540,558,522,555,453,540,471,534,444,522,384,555,357,468,435,561,483,591,468,537,381,540,
    414,468,366,423,309,372,363,387,348,378,363,387,315,372,321,360,324,342,321,354,306,339,300,324,300,321,288,318,270,315,258,303,270,354,339,402,384,441,432,504,
    435,474,435,498,468,525,474,525,477,507,477,498,474,501,477,507,471,486,471,492,480,501,471,486,474,492,468,486,477,513,498,522,501,510,495,516,477,507,408,516,
    462,555,510,567,480,558,483,567,495,534,495,561,447,519,474,552,486,528,513,555,525,549,528,564,546,576,549,579,552,582,549,573,549,561,537,564,555,579,549,573,
    540,558,540,561,528,558,531,582,555,630,591,642,594,660,567,621,591,642,537,612,540,609,507,645,636,708,642,690,636,693,639,678,651,681,645,675,633,693,645,657,
    645,654,642,663,651,666,651,675,642,657,621,654,627,645,609,651,618,708,615,675,624,663,627,693,630,669,636,687,663,726,696,807,681,780,678,717,678,714,681,726,
    690,717,693,717,702,735,705,726,699,726,693,729,699,717,696,714,702,711,705,732,696,726,696,750,660,723,651,702,693,837,753,825,801,879,756,873,768,837,618,783,
    639,771,633,684,624,666,618,657,597,651,597,654,624,672,618,642,612,633,585,621,567,600,561,591,561,579,567,609,594,621,615,657,555,642,543,615,591,627,567,606,
    585,711,630,702,600,684,579,660,615,690,603,690,522,636,516,555,498,537,516,537,525,567,522,540,522,543,519,543,522,552,519,546,519,537,510,543,498,546,459,528
  ] },
  { base: 311, data: [
    339,450,411,486,384,462,321,429,312,369,348,420,267,387,297,405,357,408,327,396,294,360,249,300,246,297,270,303,294,324,294,306,282,297,276,297,270,300,255,285,
    276,294,270,285,237,282,219,300,273,327,216,300,225,267,234,276,252,303,153,312,153,228,183,270,186,297,279,354,297,333,282,342,306,342,333,363,315,375,321,342,
    318,339,324,351,339,357,333,354,324,351,333,348,327,348,336,390,345,399,306,384,300,375,300,336,204,345,156,243,198,324,198,303,213,276,243,300,258,294,279,345,
    291,333,312,339,294,342,297,321,294,318,309,333,306,336,306,324,306,321,306,318,306,318,270,318,222,303,237,288,204,258,231,273,231,291,108,285,138,204,96,180,
    90,177,129,180,117,171,132,189,162,192,168,186,174,228,177,228,216,231,204,237,228,264,219,249,210,252,246,273,258,294,258,291,252,294,213,348,300,351,309,381,
    369,447,363,453,342,402,315,420,315,372,315,360,303,354,279,345,312,336,309,348,330,366,333,354,324,339,318,351,330,363,348,372,348,363,351,369,348,372,336,396,
    285,387,258,351,216,276,204,297,273,321,240,324,234,279,222,285,210,252,201,240,198,243,189,231,213,243,216,231,213,258,219,234,213,231,210,234,204,243,228,246,
    231,249,225,246,216,237,195,228,165,234,138,186,150,183,105,183,141,213,102,174,150,201,147,246,189,339,294,357,309,351,315,351,324,348,333,351,318,366,321,333,
    315,330,309,327,294,336,300,330,312,342,324,354,318,333,306,369,351,423,351,411,372,399,366,411,336,411,270,384,291,357,303,369,324,387,351,387,330,366,327,360,
    351,378,369,384,363,393,360,387,360,372,354,381,369,393,372,390,375,396,372,390,372,390,360,405,378,426,387,450,420,516,426,489,471,540,450,570,531,576,528,621,
    588,663,591,642,624,657,642,684,648,684,654,690,627,696,639,678,639,654,630,660,633,657,630,648,627,642,630,657,636,654,636,693,672,717,660,696,648,684,639,672,
    624,687,603,666,615,669,648,774,732,777,723,768,753,816,780,840,813,834,828,846,828,843,819,837,813,831,813,831,804,915,837,879,861,885,828,885,825,849,810,861,
    801,846,822,882
  ] }
];
var x = 0, d = '';
runs.forEach(function (run) {
  for (var i = 0; i < run.data.length; i += 2) {
    var top = run.base + Math.round(run.data[i] / 3);
    var bottom = run.base + Math.round(run.data[i + 1] / 3);
    d += 'M' + x + ' ' + top + 'h1V' + bottom + 'h-1z';
    x += 2;
  }
});
document.getElementById('bars').setAttribute('d', d);

var deals = [
  ['3', '2019.06.17 01:00:13', 'buy', '0.01', 'eurgbp', '0.89096', '0.00000', '0.00000', '0.89355', '0.00', '-0.06', '3.24'],
  ['1', '2019.06.17 01:00:17', 'sell', '0.03', 'usdjpy', '108.505', '0.000', '0.000', '108.348', '0.00', '-0.27', '4.35'],
  ['3', '2019.06.17 01:00:15', 'sell', '0.01', 'gbpusd', '1.25860', '0.00000', '0.00000', '1.25280', '0.00', '0.03', '5.80'],
  ['3', '2019.06.14 01:00:01', 'sell', '0.01', 'eurusd', '1.12765', '0.00000', '0.00000', '1.11948', '0.00', '0.12', '8.17'],
  ['4', '2019.06.14 01:00:00', 'sell', '0.01', 'eurusd', '1.12766', '0.00000', '0.00000', '1.11948', '0.00', '0.12', '8.18'],
  ['3', '2019.06.14 01:00:01', 'sell', '0.01', 'gbpusd', '1.26748', '0.00000', '0.00000', '1.25280', '0.00', '0.06', '14.68'],
  ['1', '2019.06.14 01:00:04', 'sell', '0.01', 'gbpusd', '1.26749', '0.00000', '0.00000', '1.25280', '0.00', '0.06', '14.69'],
  ['3', '2019.06.14 01:00:16', 'sell', '0.02', 'eurjpy', '122.221', '0.000', '0.000', '121.289', '0.00', '-0.04', '17.20']
];
var cross = '<svg width="8" height="8"><use href="#i-x"/></svg>';
document.getElementById('deals').innerHTML = deals.map(function (row) {
  return '<tr>' + row.map(function (cell, i) {
    return '<td>' + cell + (i === row.length - 1 ? cross : '') + '</td>';
  }).join('') + '</tr>';
}).join('');
```
